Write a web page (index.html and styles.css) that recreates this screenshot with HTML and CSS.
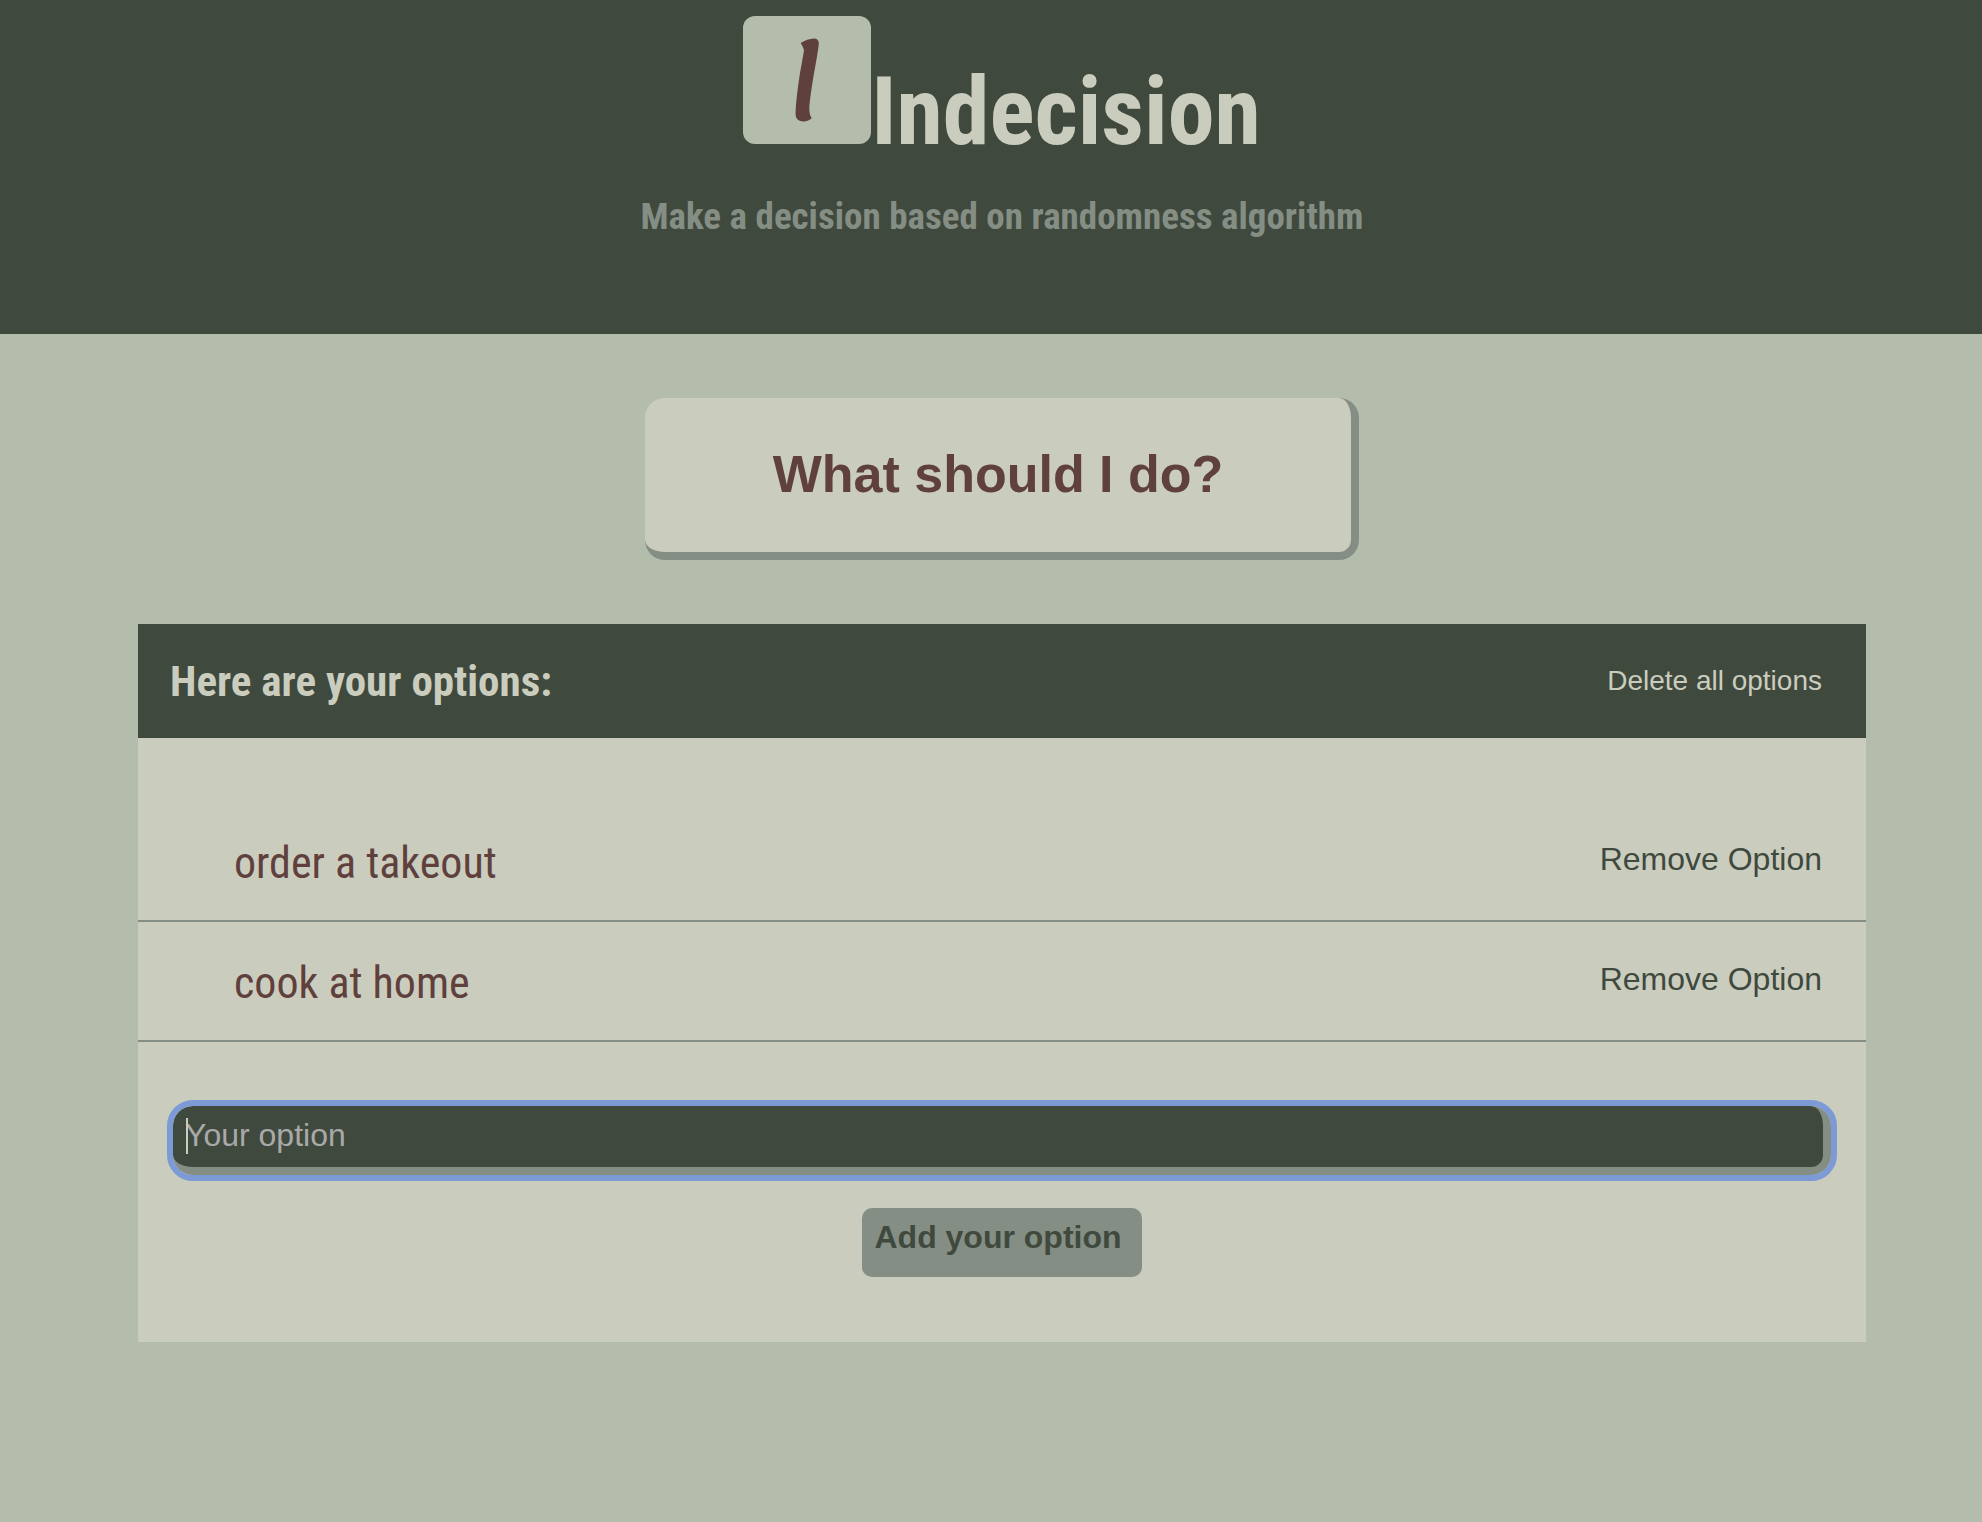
FILE: index.html
```html
<!DOCTYPE html>
<html lang="en">
<head>
  <meta charset="utf-8">
  <meta name="viewport" content="width=device-width, initial-scale=1">
  <title>Indecision</title>
  <link rel="stylesheet" href="styles.css">
</head>
<body>
  <header class="header">
    <div class="brand">
      <svg class="brand-logo" viewBox="0 0 128 128" aria-hidden="true">
        <rect class="logo-tile" width="128" height="128" rx="12"/>
        <path class="logo-stroke" d="M57.700 27Q64 22.800 71 22.500Q75.700 22.500 75.800 27.500Q75.500 33 71 57.300Q67.500 78 66.300 90.700Q66.200 99 68.700 102.300Q65.500 105.500 60.300 105.400Q53.300 105.300 52.600 99Q52.300 88 57 57Q60.500 38 61 34Q60.500 31.500 57.700 27Z"/>
      </svg>
      <h1 class="brand-title">Indecision</h1>
    </div>
    <h2 class="subtitle">Make a decision based on randomness algorithm</h2>
  </header>
  <main class="content">
    <button class="big-button" type="button">What should I do?</button>
    <section class="widget">
      <div class="widget-header">
        <h3 class="widget-title">Here are your options:</h3>
        <button class="link-button link-button-light" type="button">Delete all options</button>
      </div>
      <ul class="options">
        <li class="option">
          <span class="option-text">order a takeout</span>
          <button class="link-button" type="button">Remove Option</button>
        </li>
        <li class="option">
          <span class="option-text">cook at home</span>
          <button class="link-button" type="button">Remove Option</button>
        </li>
      </ul>
      <form class="add-option">
        <div class="field">
          <input class="field-input" type="text" name="option" placeholder="Your option" aria-label="Your option" autocomplete="off">
          <span class="caret" aria-hidden="true"></span>
        </div>
        <button class="add-button" type="submit">Add your option</button>
      </form>
    </section>
  </main>
</body>
</html>
```

FILE: styles.css
```css
:root {
  --dark: #40493d;
  --sage: #b4bdac;
  --cream: #cacdbe;
  --grey: #858e84;
  --brown: #5f403d;
  --focus: #7b9ad6;
  --sans: "Liberation Sans", Arial, sans-serif;
  --narrow: "Arial Narrow", "Roboto Condensed", "Liberation Sans", sans-serif;
}

* {
  box-sizing: border-box;
}

body {
  margin: 0;
  background: var(--sage);
  font-family: var(--sans);
}

h1, h2, h3, ul {
  margin: 0;
  padding: 0;
}

button {
  margin: 0;
  font-family: inherit;
  cursor: pointer;
}

.header {
  display: flex;
  flex-direction: column;
  align-items: center;
  gap: 28px;
  padding: 16px 0 95px 22px;
  background: var(--dark);
}

.brand {
  display: flex;
  align-items: baseline;
}

.brand-logo {
  width: 128px;
  height: 128px;
}

.logo-tile {
  fill: var(--sage);
}

.logo-stroke {
  fill: var(--brown);
}

.brand-title {
  color: var(--cream);
  font: bold 94px/110px var(--narrow);
}

.subtitle {
  color: var(--grey);
  font: bold 37px/44px var(--narrow);
}

.content {
  display: flex;
  flex-direction: column;
  align-items: center;
  gap: 64px;
  padding: 64px 116px 64px 138px;
}

.big-button {
  padding: 46px 128px 48px;
  border: 0 solid var(--grey);
  border-width: 0 8px 8px 0;
  border-radius: 20px;
  background: var(--cream);
  color: var(--brown);
  font-size: 52px;
  font-weight: bold;
  line-height: 60px;
}

.widget {
  align-self: stretch;
  background: var(--cream);
}

.widget-header {
  display: flex;
  align-items: center;
  justify-content: space-between;
  padding: 32px 44px 32px 32px;
  background: var(--dark);
}

.widget-title {
  color: var(--cream);
  font: bold 43px/50px var(--narrow);
}

.link-button {
  padding: 0 0 8px;
  border: 0;
  background: none;
  color: var(--dark);
  font-size: 32px;
  line-height: 36px;
}

.link-button-light {
  padding: 0;
  color: var(--cream);
  font-size: 28px;
}

.options {
  padding-top: 64px;
  list-style: none;
}

.option {
  display: flex;
  align-items: center;
  justify-content: space-between;
  padding: 34px 44px 30px 96px;
  border-bottom: 2px solid var(--grey);
}

.option-text {
  color: var(--brown);
  font: 44px/54px var(--narrow);
}

.add-option {
  display: flex;
  flex-direction: column;
  align-items: center;
  gap: 33px;
  padding: 64px 35px 65px;
}

.field {
  position: relative;
  align-self: stretch;
}

.field-input {
  display: block;
  width: 100%;
  height: 69px;
  padding: 11px 12px 13px;
  border: 0 solid var(--grey);
  border-width: 0 8px 8px 0;
  border-radius: 20px;
  outline: 6px solid var(--focus);
  background: var(--dark);
  color: var(--cream);
  font: 32px/37px var(--sans);
}

.field-input::placeholder {
  color: #a9a9a9;
  opacity: 1;
}

.caret {
  position: absolute;
  top: 12px;
  left: 13px;
  width: 2px;
  height: 36px;
  background: var(--cream);
}

.add-button {
  padding: 11px 12px 13px;
  border: 0 solid var(--grey);
  border-width: 0 8px 8px 0;
  border-radius: 10px;
  background: var(--grey);
  color: var(--dark);
  font-size: 32px;
  font-weight: bold;
  line-height: 37px;
}
```
